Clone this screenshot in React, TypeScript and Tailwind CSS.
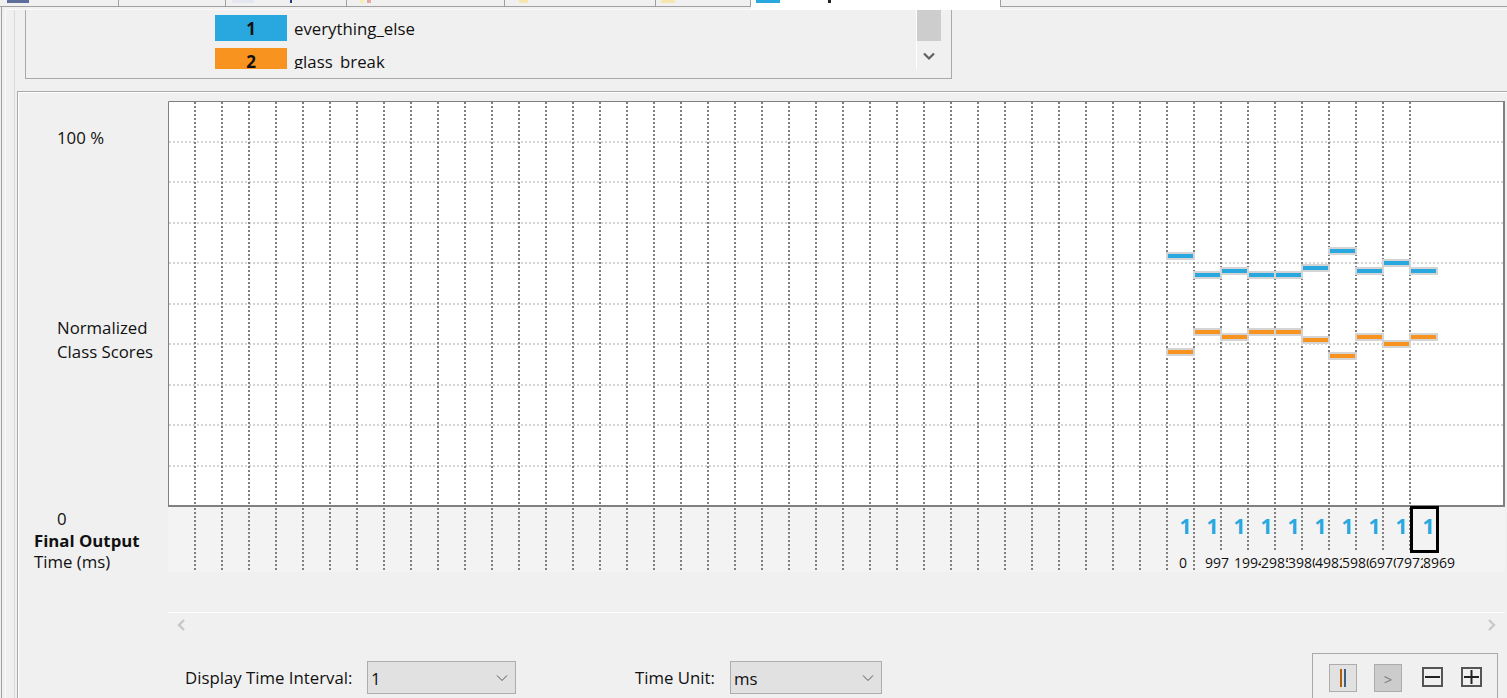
const FONT = "font-['Open_Sans','Noto_Sans',sans-serif]";

const blueBars = [256, 275, 271, 275, 275, 268, 251, 271, 263, 271];
const orangeBars = [352, 332, 337, 332, 332, 340, 356, 337, 344, 337];
const gridRows = [1, 2, 3, 4, 5, 6, 7, 8, 9];
const gridCols = Array.from({ length: 46 }, (_, i) => i + 1);
const times = ["1994", "2985", "3980", "4982", "5980", "6970", "7972"];

const Chevron = ({ dir }: { dir: "left" | "right" }) => (
  <svg width="10" height="12" viewBox="0 0 10 12">
    <path
      d={dir === "left" ? "M8 1 L3 6 L8 11" : "M2 1 L7 6 L2 11"}
      fill="none"
      stroke="#c8c8c8"
      strokeWidth="2.4"
    />
  </svg>
);

const ComboBox = ({ value, width }: { value: string; width: string }) => (
  <div className={`flex h-[33px] shrink-0 items-center justify-between border border-[#adadad] bg-[#e1e1e1] pl-[3px] pr-[7px] text-[16.8px] text-[#111] ${width}`}>
    <span className="pt-[2px]">{value}</span>
    <svg width="12" height="8" viewBox="0 0 12 8">
      <path d="M1 1.5 L6 6.5 L11 1.5" fill="none" stroke="#555" strokeWidth="1" />
    </svg>
  </div>
);

const Plot = () => (
  <svg width="1337" height="406" className="block shrink-0">
    <rect x="0.5" y="0.5" width="1336" height="405" fill="#fff" />
    {gridRows.map((r) => (
      <line key={r} x1="1" x2="1336" y1={Math.round(r * 40.5)} y2={Math.round(r * 40.5)} stroke="#d4d4d4" strokeWidth="2" strokeDasharray="2 2" />
    ))}
    {gridCols.map((c) => (
      <line key={c} x1={c * 27} x2={c * 27} y1="1" y2="404" stroke="#808080" strokeWidth="2" strokeDasharray="2 2" />
    ))}
    {blueBars.map((y, i) => (
      <g key={i}>
        <rect x={998 + i * 27} y={y - 105} width="29" height="8" fill="#d4d4d4" />
        <rect x={1000 + i * 27} y={y - 103} width="25" height="4" fill="#29a8e0" />
      </g>
    ))}
    {orangeBars.map((y, i) => (
      <g key={i}>
        <rect x={998 + i * 27} y={y - 105} width="29" height="8" fill="#d4d4d4" />
        <rect x={1000 + i * 27} y={y - 103} width="25" height="4" fill="#f7931e" />
      </g>
    ))}
    <path d="M0.5 406 V0.5 H1336" fill="none" stroke="#808080" />
    <path d="M1336 0 V406" fill="none" stroke="#808080" strokeWidth="2" />
    <path d="M0 405 H1337" fill="none" stroke="#808080" strokeWidth="2" />
  </svg>
);

const OutputStrip = () => (
  <div className="relative h-[65px] shrink-0 bg-[#f3f3f3]">
    <svg width="1337" height="65" className="absolute inset-0">
      {gridCols.map((c) => (
        <line key={c} x1={c * 27} x2={c * 27} y1="1" y2="65" stroke="#808080" strokeWidth="2" strokeDasharray="2 2" />
      ))}
    </svg>
    <div className="absolute inset-0 flex flex-col">
      <div className="flex h-[43px] shrink-0 pl-[1004px]">
        {blueBars.map((_, i) => (
          <span key={i} className="w-[27px] pt-[5px] text-center text-[21px] leading-[28px] font-bold text-[#29a8e0]">
            1
          </span>
        ))}
      </div>
      <div className="flex h-[22px] shrink-0 text-[14px] leading-[26px] text-[#111]">
        <span className="ml-[1011px] w-[20px]">0</span>
        <span className="ml-[6px] w-[29px] overflow-hidden bg-[#f3f3f3]">997</span>
        {times.map((t) => (
          <span key={t} className="w-[27px] overflow-hidden bg-[#f3f3f3] whitespace-nowrap">
            {t}
          </span>
        ))}
        <span className="bg-[#f3f3f3]">8969</span>
      </div>
    </div>
    <div className="absolute top-[-1px] left-[1242px] h-[47px] w-[29px] border-[3px] border-black" />
  </div>
);

const TabIcon = ({ className }: { className: string }) => <span className={`h-[3px] ${className}`} />;

const tabCell = "flex h-[6px] shrink-0 border-r border-[#a0a0a0]";

export default function App() {
  return (
    <div className={`flex h-[698px] w-[1507px] flex-col overflow-hidden bg-[#f0f0f0] ${FONT}`}>
      <div className="flex h-[7px] shrink-0 items-start border-b border-[#a0a0a0]">
        <div className={`${tabCell} w-[119px] pl-[7px]`}>
          <TabIcon className="w-[22px] bg-[#5f6d9c]" />
        </div>
        <div className={`${tabCell} w-[107px]`} />
        <div className={`${tabCell} w-[121px] pl-[6px]`}>
          <TabIcon className="w-[22px] bg-[#e4e6f0]" />
          <TabIcon className="ml-[36px] w-[2px] bg-[#1c3f80]" />
        </div>
        <div className={`${tabCell} w-[158px] pl-[13px]`}>
          <TabIcon className="w-[4px] bg-[#f4efb0]" />
          <TabIcon className="ml-[3px] w-[4px] bg-[#e7a8a8]" />
        </div>
        <div className={`${tabCell} w-[151px] pl-[14px]`}>
          <TabIcon className="w-[9px] bg-[#f6e7b0]" />
        </div>
        <div className={`${tabCell} w-[95px] pl-[5px]`}>
          <TabIcon className="w-[14px] bg-[#f6e7b0]" />
        </div>
        <div className="relative z-10 flex h-[10px] w-[249px] shrink-0 bg-white pl-[5px]">
          <TabIcon className="w-[24px] bg-[#29a8e0]" />
          <TabIcon className="ml-[48px] w-[3px] bg-[#222]" />
        </div>
        <div className="h-[6px] flex-1 border-l border-[#a0a0a0]" />
      </div>
      <div className="flex min-h-0 flex-1 pt-[2px] pl-px">
        <div className="-mt-[2px] w-px shrink-0 bg-[#a0a0a0]" />
        <div className="ml-[3px] flex min-h-0 flex-1 flex-col border-t border-l border-[#fafafa]">
          <div className="ml-[8px] flex min-h-0 flex-1 flex-col border-l border-[#dcdcdc]">
            <div className="ml-[10px] h-[69px] w-[927px] shrink-0 border-r border-b border-l border-[#a9a9a9]">
              <div className="flex h-[59px] overflow-hidden pt-[5px] pl-[189px]">
                <div className="flex flex-1 flex-col gap-[7px]">
                  <div className="flex h-[26px] shrink-0 items-center gap-[7px]">
                    <span className="flex h-[26px] w-[72px] items-center justify-center bg-[#29a8e0] pt-[2px] text-[17px] font-bold text-[#111]">1</span>
                    <span className="pt-[2px] text-[16.8px] text-[#111]">everything_else</span>
                  </div>
                  <div className="flex h-[26px] shrink-0 items-center gap-[7px]">
                    <span className="flex h-[26px] w-[72px] items-center justify-center bg-[#f7931e] pt-[2px] text-[17px] font-bold text-[#111]">2</span>
                    <span className="pt-[2px] text-[16.8px] text-[#111]">glass_break</span>
                  </div>
                </div>
                <div className="mr-[10px] -mt-[5px] flex h-[59px] w-[25px] shrink-0 flex-col items-center border-l border-white">
                  <div className="h-[31px] w-full bg-[#cdcdcd]" />
                  <svg width="12" height="9" viewBox="0 0 12 9" className="mt-[11px]">
                    <path d="M1 1.5 L6 6.5 L11 1.5" fill="none" stroke="#606060" strokeWidth="2.2" />
                  </svg>
                </div>
              </div>
            </div>
            <div className="ml-[2px] mt-[12px] flex min-h-0 flex-1 flex-col border-t border-l border-[#a9a9a9]">
              <div className="flex min-h-0 flex-1 border-t border-l border-white">
                <div className="flex w-[149px] shrink-0 flex-col text-[16.8px] leading-[24px] text-[#111]">
                  <span className="mt-[33px] pl-[38px]">100 %</span>
                  <span className="mt-[166px] pl-[38px]">Normalized</span>
                  <span className="pl-[38px]">Class Scores</span>
                  <span className="mt-[143px] pl-[38px]">0</span>
                  <span className="-mt-[2px] pl-[15px] font-bold">Final Output</span>
                  <span className="-mt-[3px] pl-[15px]">Time (ms)</span>
                </div>
                <div className="flex w-[1337px] shrink-0 flex-col pt-[8px]">
                  <Plot />
                  <OutputStrip />
                  <div className="mt-[40px] flex h-[25px] shrink-0 items-center justify-between border-t border-white px-[8px]">
                    <Chevron dir="left" />
                    <Chevron dir="right" />
                  </div>
                  <div className="mt-[24px] flex shrink-0 items-start pl-[17px] text-[16.8px] text-[#111]">
                    <span className="mt-[4px] w-[182px] shrink-0">Display Time Interval:</span>
                    <ComboBox value="1" width="w-[149px]" />
                    <span className="mt-[4px] ml-[119px] w-[95px] shrink-0">Time Unit:</span>
                    <ComboBox value="ms" width="w-[152px]" />
                    <div className="ml-[430px] -mt-[8px] flex h-[60px] w-[186px] shrink-0 items-start border-t border-l border-r border-[#a9a9a9] pt-[10px] pl-[16px]">
                      <div className="flex h-[28px] w-[28px] shrink-0 items-center justify-center gap-[2px] border border-[#adadad] bg-[#e1e1e1]">
                        <span className="h-[18px] w-[2px] bg-[#b0600a]" />
                        <span className="h-[18px] w-[2px] bg-[#3a5f80]" />
                      </div>
                      <div className="ml-[17px] flex h-[28px] w-[28px] shrink-0 items-center justify-center border border-[#adadad] bg-[#cccccc] pt-[2px] text-[15px] text-[#807a80]">&gt;</div>
                      <svg width="22" height="22" viewBox="0 0 22 22" className="ml-[20px] mt-[3px] shrink-0">
                        <rect x="1" y="1" width="19" height="18" fill="#f0f0f0" stroke="#555" strokeWidth="2" />
                        <path d="M3 10 H18" stroke="#222" strokeWidth="2" />
                      </svg>
                      <svg width="22" height="22" viewBox="0 0 22 22" className="ml-[17px] mt-[3px] shrink-0">
                        <rect x="1" y="1" width="19" height="18" fill="#f0f0f0" stroke="#555" strokeWidth="2" />
                        <path d="M3 10 H18 M10.5 3 V17" stroke="#222" strokeWidth="2" />
                      </svg>
                    </div>
                  </div>
                </div>
              </div>
            </div>
          </div>
        </div>
      </div>
    </div>
  );
}
